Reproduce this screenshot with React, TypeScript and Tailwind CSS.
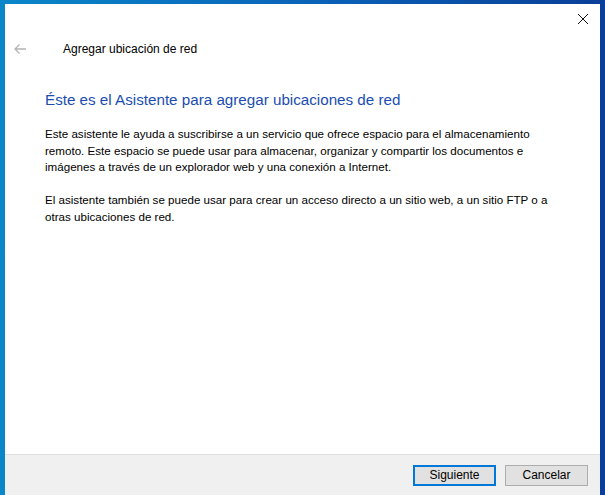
import React from "react";

const font = { fontFamily: '"Segoe UI", "Liberation Sans", Arial, sans-serif' };

function BackArrow() {
  return (
    <svg width="14" height="12" viewBox="0 0 14 12" fill="none">
      <path d="M13 6H2M6.5 1.5L2 6l4.5 4.5" stroke="#b4b4b4" strokeWidth="1.3" />
    </svg>
  );
}

function CloseIcon() {
  return (
    <svg width="12" height="12" viewBox="0 0 12 12" fill="none">
      <path d="M1 1l10 10M11 1L1 11" stroke="#111" strokeWidth="1" />
    </svg>
  );
}

export default function App() {
  return (
    <div
      className="w-[605px] h-[495px] pl-[5px] pr-[5px] pt-[4px] bg-[linear-gradient(to_right,#0a86c9,#0a64b8_50%,#0a3e99)] overflow-hidden"
      style={font}
    >
      <div className="w-[595px] h-[491px] bg-white flex flex-col">
        {/* title bar */}
        <div className="h-[28px] flex justify-end items-start">
          <div className="w-[46px] h-[28px] flex items-center justify-center mt-[1px] mr-[-6px]">
            <CloseIcon />
          </div>
        </div>

        {/* header with back arrow */}
        <div className="h-[32px] pt-[2px] flex items-center">
          <div className="w-[58px] pl-[8px] flex items-center">
            <BackArrow />
          </div>
          <span className="text-[12px] text-[#000]">Agregar ubicación de red</span>
        </div>

        {/* content */}
        <div className="flex-1 pl-[40px] pr-[30px] pt-[26px]">
          <h1 className="text-[15.2px] leading-[20px] text-[#1b4db0] mb-[16px]">
            Éste es el Asistente para agregar ubicaciones de red
          </h1>
          <div className="text-[11.6px] leading-[16.5px] text-black">
            <p className="mb-[16.5px]">
              <span className="block whitespace-nowrap">
                Este asistente le ayuda a suscribirse a un servicio que ofrece espacio para el almacenamiento
              </span>
              <span className="block whitespace-nowrap">
                remoto. Este espacio se puede usar para almacenar, organizar y compartir los documentos e
              </span>
              <span className="block whitespace-nowrap">
                imágenes a través de un explorador web y una conexión a Internet.
              </span>
            </p>
            <p>
              <span className="block whitespace-nowrap">
                El asistente también se puede usar para crear un acceso directo a un sitio web, a un sitio FTP o a
              </span>
              <span className="block whitespace-nowrap">otras ubicaciones de red.</span>
            </p>
          </div>
        </div>

        {/* footer */}
        <div className="h-[41px] bg-[#f0f0f0] border-t border-[#dfdfdf] flex items-center justify-end gap-[9px] pr-[12px]">
          <button className="w-[83px] h-[21px] bg-[#e1e1e1] border-2 border-[#0078d7] text-[12px] text-black flex items-center justify-center">
            Siguiente
          </button>
          <button className="w-[83px] h-[21px] bg-[#e1e1e1] border border-[#adadad] text-[12px] text-black flex items-center justify-center">
            Cancelar
          </button>
        </div>
      </div>
    </div>
  );
}
